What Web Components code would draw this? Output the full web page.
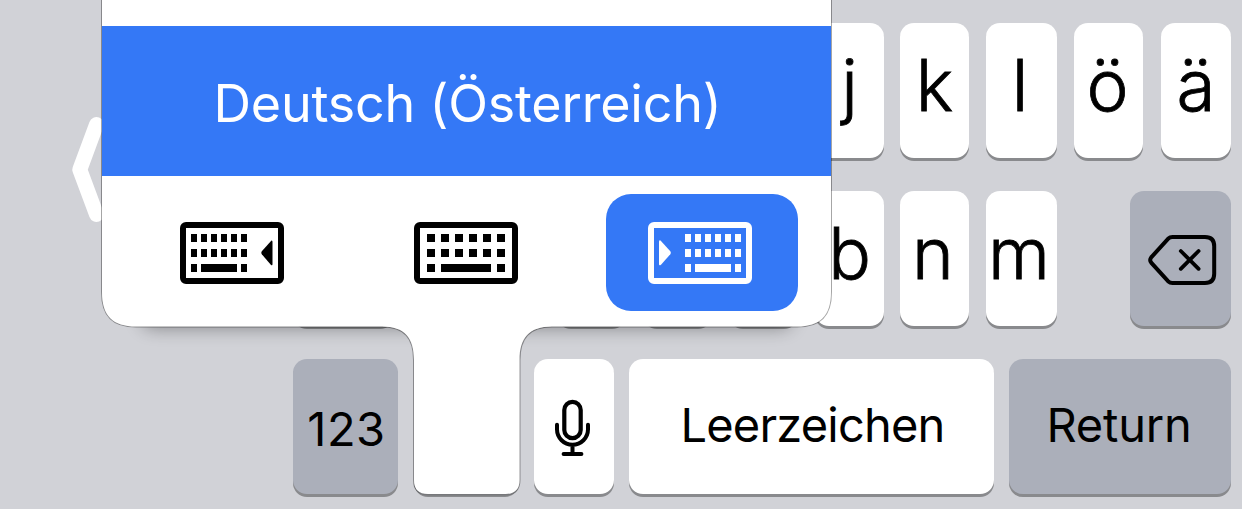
<!DOCTYPE html>
<html lang="de">
<head>
<meta charset="utf-8">
<title>Tastatur</title>
<style>
    body {
        margin: 0;
        width: 1242px;
        height: 509px;
        overflow: hidden;
        font-family: 'Inter', 'Liberation Sans', sans-serif;
    }
</style>
</head>
<body>
<key-board>
    <key-row>
        <key-cap style="--w: 69px; --gap: 16px">j</key-cap>
        <key-cap style="--w: 69px; --gap: 16px">k</key-cap>
        <key-cap style="--w: 71px; --gap: 17px; --nudge: 3px">l</key-cap>
        <key-cap style="--w: 69px; --gap: 17px; --nudge: 2px">ö</key-cap>
        <key-cap style="--w: 70px; --gap: 18px">ä</key-cap>
    </key-row>
    <key-row>
        <key-cap dark style="--w: 101px"></key-cap>
        <key-cap style="--w: 69px; --gap: 163px"></key-cap>
        <key-cap style="--w: 69px; --gap: 17px"></key-cap>
        <key-cap style="--w: 69px; --gap: 17px"></key-cap>
        <key-cap style="--w: 69px; --gap: 17px">b</key-cap>
        <key-cap style="--w: 69px; --gap: 16px; --nudge: 3px">n</key-cap>
        <key-cap style="--w: 71px; --gap: 17px; --nudge: 5px">m</key-cap>
        <key-cap dark style="--w: 101px; --gap: 73px"><line-icon name="delete"></line-icon></key-cap>
    </key-row>
    <key-row>
        <key-cap dark small style="--w: 105px; --line: 139px; --indent: 2px; --track: .5px">123</key-cap>
        <key-cap style="--w: 105px; --gap: 16px"></key-cap>
        <key-cap style="--w: 80px; --gap: 15px"><line-icon name="mic"></line-icon></key-cap>
        <key-cap small style="--w: 365px; --gap: 15px; --indent: 2px; --track: -.8px">Leerzeichen</key-cap>
        <key-cap dark small style="--w: 222px; --gap: 15px; --nudge: 2px; --track: -.2px">Return</key-cap>
    </key-row>
    <language-popup slot="overlay">
        Deutsch (Österreich)
        <dock-option slot="docks" side="left"></dock-option>
        <dock-option slot="docks" side="full"></dock-option>
        <dock-option slot="docks" side="right" selected></dock-option>
    </language-popup>
</key-board>

<script>
(() => {
    // helper: attach an open shadow root with the given markup
    const render = (elem, html) => {
        elem.attachShadow({ mode: 'open' }).innerHTML = html
    }

    // The whole keyboard area, rows stacked and aligned to the right
    class KeyBoard extends HTMLElement {
        constructor () {
            super()
            render(this, `
                <style>
                    :host {
                        display: block;
                        position: relative;
                        height: 509px;
                        background: #d1d2d7;
                        overflow: hidden;
                    }
                    .rows {
                        display: flex;
                        flex-direction: column;
                        gap: 33px;
                        padding: 23px 11px 0 0;
                    }
                    .handle {
                        position: absolute;
                        left: 68px;
                        top: 110px;
                    }
                </style>
                <div class="rows"><slot></slot></div>
                <svg class="handle" width="50" height="120" viewBox="0 0 50 120">
                    <path d="M28.5 14.5 L11.8 59.7 L28.5 104.5" fill="none" stroke="#fff"
                        stroke-width="15" stroke-linecap="round" stroke-linejoin="round"/>
                </svg>
                <slot name="overlay"></slot>
            `)
        }
    }

    class KeyRow extends HTMLElement {
        constructor () {
            super()
            render(this, `
                <style>
                    :host {
                        display: flex;
                        justify-content: flex-end;
                        height: 135px;
                    }
                </style>
                <slot></slot>
            `)
        }
    }

    class KeyCap extends HTMLElement {
        constructor () {
            super()
            render(this, `
                <style>
                    :host {
                        display: flex;
                        flex: none;
                        justify-content: center;
                        box-sizing: border-box;
                        width: var(--w);
                        height: 135px;
                        margin-left: var(--gap, 0);
                        padding-left: var(--indent, 0);
                        padding-right: var(--nudge, 0);
                        border-radius: 14px;
                        background: #fff;
                        box-shadow: 0 3px 0 #898a8d;
                        color: #000;
                        font-size: 71px;
                        font-weight: 300;
                        line-height: 125px;
                        white-space: nowrap;
                        -webkit-text-stroke: .8px #000;
                    }
                    :host([dark]) {
                        background: #abafba;
                    }
                    :host([small]) {
                        font-size: 47px;
                        font-weight: 400;
                        letter-spacing: var(--track, 0);
                        line-height: var(--line, 131px);
                        -webkit-text-stroke: 0;
                    }
                </style>
                <slot></slot>
            `)
        }
    }

    const lineIcons = {
        delete: `
            <svg width="69" height="52" viewBox="0 0 69 52">
                <path d="M26.5 3 H59 Q68.2 3 68.2 12.2 V39.8 Q68.2 49 59 49 H26.5 Q24 49 22 47.2 L5.2 28.6 Q3.2 26 5.2 23.4 L22 4.8 Q24 3 26.5 3 Z" stroke-width="4"/>
                <path d="M34.8 17 L52.6 34.8 M52.6 17 L34.8 34.8" stroke-width="3.8"/>
            </svg>`,
        mic: `
            <svg width="40" height="58" viewBox="0 0 40 58">
                <rect x="10.3" y="2.9" width="16.4" height="36.2" rx="8.2" stroke-width="4.2"/>
                <path d="M3 25.8 V30.3 A15.5 15.5 0 0 0 34 30.3 V25.8 M18.5 45.8 V55 M9.6 55 H27.4" stroke-width="4"/>
            </svg>`
    }

    class LineIcon extends HTMLElement {
        connectedCallback() {
            render(this, `
                <style>
                    :host {
                        display: flex;
                        align-items: center;
                        padding-top: 2px;
                    }
                    svg {
                        overflow: visible;
                        fill: none;
                        stroke: #000;
                        stroke-linecap: round;
                    }
                </style>
                ${lineIcons[this.getAttribute('name')]}
            `)
        }
    }

    // Popup growing out of the globe key
    class LanguagePopup extends HTMLElement {
        constructor () {
            super()
            render(this, `
                <style>
                    :host {
                        display: block;
                        position: absolute;
                        left: 102px;
                        top: 0;
                        width: 729px;
                        height: 509px;
                    }
                    .shape {
                        position: absolute;
                        left: -22px;
                        top: 0;
                    }
                    .content {
                        position: relative;
                        padding-top: 26px;
                    }
                    .language {
                        height: 150px;
                        padding-left: 2px;
                        background: #3478f6;
                        color: #fff;
                        font-size: 52px;
                        font-weight: 400;
                        letter-spacing: -.2px;
                        line-height: 155px;
                        text-align: center;
                        white-space: nowrap;
                    }
                    .docks {
                        display: flex;
                        justify-content: space-between;
                        padding: 18px 33px 0 34px;
                    }
                </style>
                <svg class="shape" width="780" height="509" viewBox="80 0 780 509">
                    <defs>
                        <filter id="soft" x="-10%" y="-100%" width="120%" height="300%">
                            <feGaussianBlur stdDeviation="9"/>
                        </filter>
                    </defs>
                    <rect x="142" y="280" width="650" height="48" rx="10" fill="#000" opacity=".36" filter="url(#soft)"/>
                    <path fill="#fff" stroke="#000" stroke-opacity=".35" stroke-width="2"
                        d="M102 -5 V292 C102 316 113 326.5 136 326.5 H382 C405 326.5 414 338 414 360 V480 Q414 494 428 494 H505.5 Q519.5 494 519.5 480 V360 C519.5 338 529 326.5 552 326.5 H797 C820 326.5 831 316 831 292 V-5 Z"/>
                    <path d="M417 489 Q420 494.5 428 494.5 H505.5 Q513.5 494.5 516.5 489" fill="none" stroke="#77787b" stroke-width="2"/>
                    <path fill="#fff"
                        d="M102 -5 V292 C102 316 113 326.5 136 326.5 H382 C405 326.5 414 338 414 360 V480 Q414 494 428 494 H505.5 Q519.5 494 519.5 480 V360 C519.5 338 529 326.5 552 326.5 H797 C820 326.5 831 316 831 292 V-5 Z"/>
                </svg>
                <div class="content">
                    <div class="language"><slot></slot></div>
                    <div class="docks"><slot name="docks"></slot></div>
                </div>
            `)
        }
    }

    // x positions of the small keys and the arrow for every dock side
    const docks = {
        left: { x: 11, step: 10, w: 6, arrow: 'M91.5 18.5 Q92.5 18 92.5 20 V42 Q92.5 44 90.8 42.7 L81.8 32.3 Q80.8 30.8 81.8 29.3 Z' },
        full: { x: 13, step: 14, w: 8, arrow: '' },
        right: { x: 37, step: 10, w: 6, arrow: 'M12.5 18.5 Q11 17.5 11 20 V42 Q11 44 13 42.7 L22.3 32.3 Q23.3 30.8 22.3 29.3 Z' }
    }

    class DockOption extends HTMLElement {
        connectedCallback() {
            const { x, step, w, arrow } = docks[this.getAttribute('side')]
            let keys = ''
            for (let i = 0; i < 6; i++) {
                keys += `<rect x="${x + i * step}" y="12" width="${w}" height="8"/>`
                keys += `<rect x="${x + i * step}" y="27" width="${w}" height="8"/>`
            }
            keys += `<rect x="${x}" y="42" width="${w}" height="8"/>`
            keys += `<rect x="${x + step}" y="42" width="${step * 3 + w}" height="8"/>`
            keys += `<rect x="${x + step * 5}" y="42" width="${w}" height="8"/>`

            render(this, `
                <style>
                    :host {
                        display: flex;
                        align-items: center;
                        justify-content: center;
                        box-sizing: border-box;
                        width: 192px;
                        height: 117px;
                        border-radius: 25px;
                        color: #000;
                    }
                    :host([side="full"]) {
                        padding-right: 2px;
                    }
                    :host([selected]) {
                        padding-right: 4px;
                        background: #3478f6;
                        color: #fff;
                    }
                </style>
                <svg width="104" height="62" viewBox="0 0 104 62" fill="currentColor">
                    <rect x="3" y="3" width="98" height="56" rx="3" fill="none" stroke="currentColor" stroke-width="6"/>
                    ${keys}
                    <path d="${arrow}"/>
                </svg>
            `)
        }
    }

    window.customElements.define('key-board', KeyBoard)
    window.customElements.define('key-row', KeyRow)
    window.customElements.define('key-cap', KeyCap)
    window.customElements.define('line-icon', LineIcon)
    window.customElements.define('language-popup', LanguagePopup)
    window.customElements.define('dock-option', DockOption)
})()
</script>
</body>
</html>
